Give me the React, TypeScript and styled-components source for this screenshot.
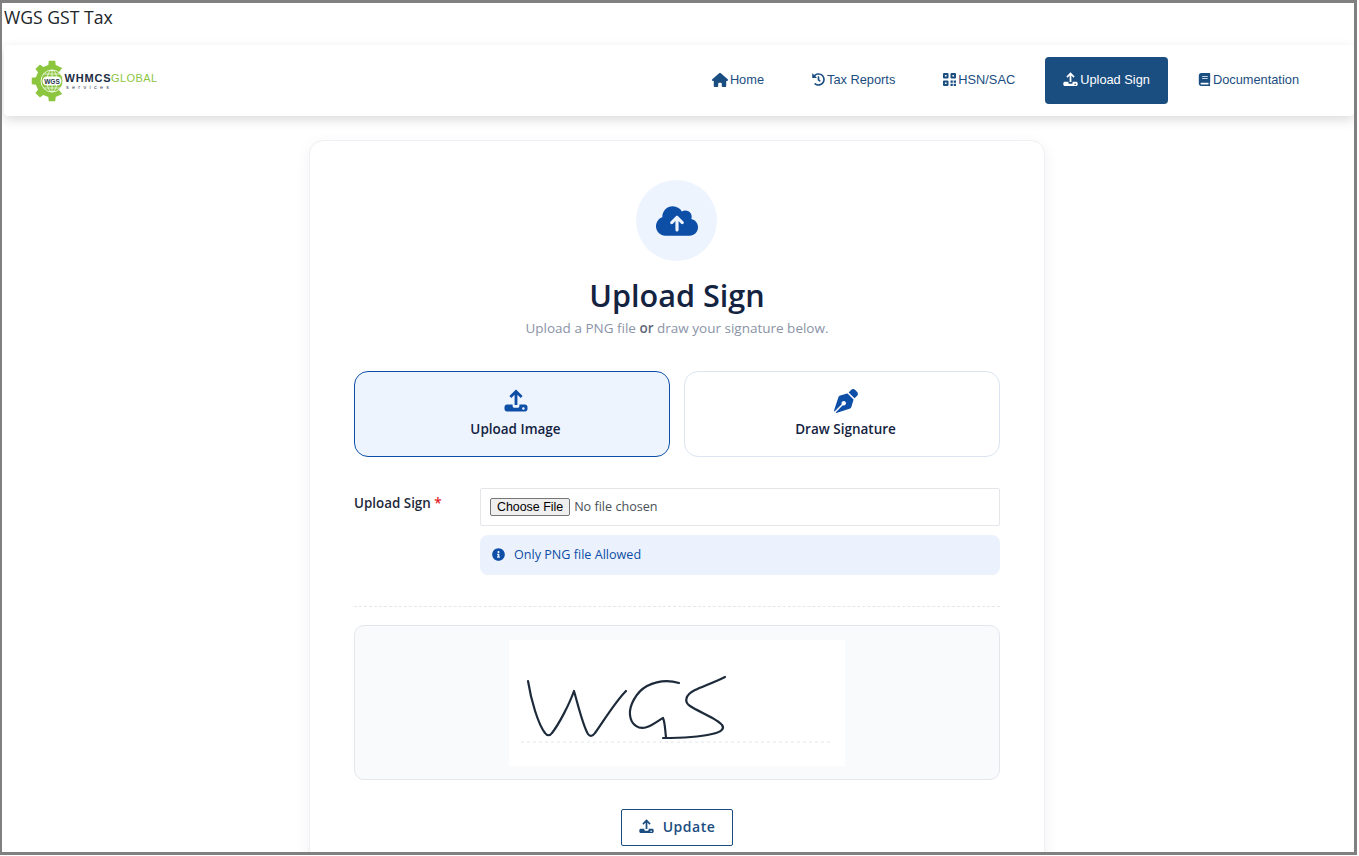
import React from 'react'
import styled, { createGlobalStyle } from 'styled-components'
import { FaBook, FaHistory, FaInfoCircle } from 'react-icons/fa'
import { FaCloudArrowUp, FaHouse, FaPenNib } from 'react-icons/fa6'

const GlobalStyle = createGlobalStyle`
  html, body {
    margin: 0;
    padding: 0;
    background: #fff;
  }
  * {
    box-sizing: border-box;
  }
`

const Frame = styled.div`
  width: 1357px;
  height: 855px;
  overflow: hidden;
  background: #fff;
  border-style: solid;
  border-color: #808080;
  border-width: 3px 3px 3px 2px;
  font-family: 'Open Sans', sans-serif;
  color: #212529;
`

const PageTitle = styled.div`
  font-size: 17.6px;
  line-height: 28px;
  padding-left: 2px;
  color: #212529;
`

const NavBar = styled.nav`
  height: 71px;
  margin: 14px 0 0 2px;
  width: 1350px;
  padding: 0 37px 0 27px;
  display: flex;
  align-items: center;
  justify-content: space-between;
  background: #fff;
  border-radius: 4px;
  box-shadow: 0 4px 12px rgba(0, 0, 0, 0.14);
`

const NavList = styled.div`
  display: flex;
  gap: 12px;
`

const NavLink = styled.a<{ $active?: boolean }>`
  height: 47px;
  padding: 0 18px 2px;
  display: flex;
  align-items: center;
  gap: 2px;
  border-radius: 4px;
  font-family: 'Liberation Sans', Arial, sans-serif;
  font-size: 12.8px;
  color: ${({ $active }) => ($active ? '#fff' : '#1a4d80')};
  background: ${({ $active }) => ($active ? '#1a4d80' : 'transparent')};
  cursor: pointer;
`

const Card = styled.main`
  width: 736px;
  height: 760px;
  margin: 24px 0 0 307px;
  padding: 39px 44px;
  display: flex;
  flex-direction: column;
  align-items: center;
  background: #fff;
  border: 1px solid #edf0f4;
  border-radius: 14px;
  box-shadow: 0 4px 16px rgba(20, 40, 80, 0.06);
`

const IconCircle = styled.div`
  width: 81px;
  height: 81px;
  flex: none;
  margin-right: 2px;
  padding-left: 2px;
  border-radius: 50%;
  background: #edf4fe;
  color: #0d4ea6;
  display: flex;
  align-items: center;
  justify-content: center;
`

const Heading = styled.h1`
  margin: 13px 0 0;
  font-size: 30.6px;
  line-height: 42px;
  font-weight: 600;
  color: #14233f;
`

const Subtitle = styled.p`
  margin: 2px 0 0;
  font-size: 13.5px;
  line-height: 20px;
  color: #8a93a6;

  strong {
    font-weight: 600;
    color: #5f6878;
  }
`

const Tabs = styled.div`
  width: 100%;
  margin-top: 33px;
  display: grid;
  grid-template-columns: 316px 316px;
  justify-content: space-between;
`

const Tab = styled.button<{ $active?: boolean }>`
  height: 86px;
  padding: 0 0 2px 7px;
  display: flex;
  flex-direction: column;
  align-items: center;
  justify-content: center;
  gap: 7px;
  font-family: inherit;
  font-size: 13.5px;
  font-weight: 600;
  color: #14233f;
  border-radius: 14px;
  border: 1px solid ${({ $active }) => ($active ? '#0d4ea6' : '#dbe4f0')};
  background: ${({ $active }) => ($active ? '#edf4fe' : '#fff')};
  cursor: pointer;

  svg {
    color: #0d4ea6;
  }
`

const FormRow = styled.div`
  width: 100%;
  margin-top: 31px;
  display: grid;
  grid-template-columns: 126px 520px;
`

const Label = styled.label`
  font-size: 13.4px;
  font-weight: 600;
  line-height: 30px;
  color: #1f2a3d;

  span {
    color: #e01b24;
  }
`

const FileInput = styled.input`
  display: block;
  width: 100%;
  height: 38px;
  padding: 9px 9px 0;
  border: 1px solid #e4e6ea;
  border-radius: 2px;
  background: #fff;
  font-family: 'Open Sans', sans-serif;
  font-size: 12.6px;
  color: #495057;

  &::file-selector-button {
    font-family: 'Liberation Sans', Arial, sans-serif;
    font-size: 12.4px;
    height: 18px;
    padding: 0 6px;
    margin-right: 4px;
    color: #000;
    background: #efefef;
    border: 1px solid #767676;
    border-radius: 2px;
  }
`

const Alert = styled.div`
  height: 40px;
  margin-top: 9px;
  padding: 0 0 2px 12px;
  display: flex;
  align-items: center;
  gap: 9px;
  border-radius: 8px;
  background: #ebf2fd;
  font-size: 12.6px;
  color: #0d4ea6;
`

const Divider = styled.hr`
  width: 100%;
  margin: 31px 0 18px;
  border: 0;
  border-top: 1px dashed #e4e7ec;
`

const PreviewBox = styled.div`
  width: 100%;
  height: 155px;
  flex: none;
  display: flex;
  align-items: center;
  justify-content: center;
  background: #f8fafc;
  border: 1px solid #e3e7ec;
  border-radius: 10px;
`

const UpdateButton = styled.button`
  width: 112px;
  height: 37px;
  flex: none;
  margin-top: 29px;
  padding: 0 0 2px;
  display: flex;
  align-items: center;
  justify-content: center;
  gap: 9px;
  background: #fff;
  border: 1px solid #1a4d80;
  border-radius: 2px;
  font-family: inherit;
  font-size: 14px;
  font-weight: 600;
  letter-spacing: 0.5px;
  color: #1a4d80;
  cursor: pointer;
`

const UploadTrayIcon = ({ size }: { size: number }) => (
  <svg width={size} height={size} viewBox="0 0 24 24" fill="currentColor">
    <path d="M12 .5 5.400 7.100l1.900 1.900 3.300-3.300V16h2.800V5.700l3.300 3.300 1.900-1.900Z" />
    <path
      fillRule="evenodd"
      d="M3 15.500h5.600V17c0 1 .8 1.800 1.800 1.800h3.200c1 0 1.800-.8 1.800-1.800v-1.500H21c1.400 0 2.500 1.100 2.500 2.500v2c0 1.400-1.100 2.500-2.500 2.500H3C1.600 22.500.5 21.400.5 20v-2c0-1.400 1.100-2.500 2.500-2.500Zm16.400 2.700a1.300 1.300 0 1 0 0 2.600 1.300 1.300 0 0 0 0-2.600Z"
    />
  </svg>
)

const GridIcon = () => (
  <svg width="13" height="13" viewBox="0 0 13 13" fill="currentColor">
    <path
      fillRule="evenodd"
      d="M1 0h3.500a1 1 0 0 1 1 1v3.500a1 1 0 0 1-1 1H1a1 1 0 0 1-1-1V1a1 1 0 0 1 1-1Zm.9 1.900v1.700h1.700V1.900ZM8.500 0H12a1 1 0 0 1 1 1v3.500a1 1 0 0 1-1 1H8.500a1 1 0 0 1-1-1V1a1 1 0 0 1 1-1Zm.9 1.900v1.700h1.700V1.900ZM1 7.500h3.500a1 1 0 0 1 1 1V12a1 1 0 0 1-1 1H1a1 1 0 0 1-1-1V8.500a1 1 0 0 1 1-1Zm.9 1.900v1.700h1.700V9.400Z"
    />
    <path d="M7.500 7.500h2.300v2.300H7.500ZM10.700 7.500H13v2.300h-2.300ZM7.500 10.700h2.300V13H7.500ZM10.700 10.700H13V13h-2.300Z" />
  </svg>
)

// gear outline: teeth every 45deg on the left side, the right side is left open for the wordmark
const gearPath = () => {
  const cx = 21
  const cy = 22
  const at = (deg: number, r: number) => {
    const a = (deg * Math.PI) / 180
    return `${(cx - Math.sin(a) * r).toFixed(2)} ${(cy - Math.cos(a) * r).toFixed(2)}`
  }
  const parts = [`M${at(-38, 10)}`, `L${at(-38, 16.5)}`]
  ;[0, 45, 90, 135, 180].forEach((t) => {
    parts.push(`L${at(t - 13, 16.5)}`, `L${at(t - 9, 20.5)}`, `L${at(t + 9, 20.5)}`, `L${at(t + 13, 16.5)}`)
  })
  parts.push(`L${at(218, 16.5)}`, `L${at(218, 10)}`, 'Z')
  return parts.join(' ')
}

const Logo = () => (
  <svg width="130" height="44" viewBox="0 0 130 44">
    <path d={gearPath()} fill="#8cc63f" />
    <circle cx="21" cy="22" r="11" fill="#8cc63f" stroke="#fff" strokeWidth="0.8" />
    <g fill="none" stroke="#fff" strokeWidth="0.7">
      <ellipse cx="21" cy="22" rx="5" ry="11" />
      <path d="M21 11v22M12.500 15h17M12.500 29h17" />
    </g>
    <rect x="11.500" y="17.500" width="19" height="9" rx="4.500" fill="#fff" />
    <text x="21" y="24.500" textAnchor="middle" fontFamily="'Liberation Sans', sans-serif" fontSize="6.500" fontWeight="700" fill="#26364a">
      WGS
    </text>
    <text x="33.500" y="22.500" fontFamily="'Liberation Sans', sans-serif" fontSize="11" fontWeight="700" fill="#1c2c44" textLength="46">
      WHMCS
    </text>
    <text x="80" y="22.500" fontFamily="'Liberation Sans', sans-serif" fontSize="11" fill="#8cc63f" textLength="46">
      GLOBAL
    </text>
    <text x="35" y="29.500" fontFamily="'Liberation Sans', sans-serif" fontSize="5.500" fill="#3b4656" textLength="43">
      services
    </text>
  </svg>
)

// signature traced by eye from the reference
const Signature = () => (
  <svg width="336" height="126" viewBox="0 0 336 126" style={{ background: '#fff', display: 'block' }}>
    <path d="M12 102H324" stroke="#e3e6ea" strokeWidth="1" strokeDasharray="3 3" fill="none" />
    <g fill="none" stroke="#1d2a3a" strokeWidth="2.200" strokeLinecap="round" strokeLinejoin="round">
      <path d="M19 41C22 60 29 84 36 93C38 96 41 96 43 93C50 84 60 65 65 51C69 65 74 86 79 94C81 97 84 96 86 93C94 82 106 62 117 51" />
      <path d="M170 43C160 40 148 41 138 46C127 52 120 66 121 75C122 85 130 90 138 87C144 85 150 80 154 78C156 82 156 90 157 97" />
      <path d="M154 98C170 98 190 97 203 94C212 92 216 89 213 85C209 79 190 72 181 66C175 62 176 55 186 50C195 46 206 42 216 37" />
    </g>
  </svg>
)

export default function App() {
  return (
    <Frame>
      <GlobalStyle />
      <PageTitle>WGS GST Tax</PageTitle>
      <NavBar>
        <Logo />
        <NavList>
          <NavLink>
            <FaHouse size={16} /> Home
          </NavLink>
          <NavLink>
            <FaHistory size={13} /> Tax Reports
          </NavLink>
          <NavLink>
            <GridIcon /> HSN/SAC
          </NavLink>
          <NavLink $active>
            <UploadTrayIcon size={15} /> Upload Sign
          </NavLink>
          <NavLink>
            <FaBook size={13} /> Documentation
          </NavLink>
        </NavList>
      </NavBar>
      <Card>
        <IconCircle>
          <FaCloudArrowUp size={42} />
        </IconCircle>
        <Heading>Upload Sign</Heading>
        <Subtitle>
          Upload a PNG file <strong>or</strong> draw your signature below.
        </Subtitle>
        <Tabs>
          <Tab $active>
            <UploadTrayIcon size={24} />
            Upload Image
          </Tab>
          <Tab>
            <FaPenNib size={24} />
            Draw Signature
          </Tab>
        </Tabs>
        <FormRow>
          <Label>
            Upload Sign <span>*</span>
          </Label>
          <div>
            <FileInput type="file" />
            <Alert>
              <FaInfoCircle size={13} />
              Only PNG file Allowed
            </Alert>
          </div>
        </FormRow>
        <Divider />
        <PreviewBox>
          <Signature />
        </PreviewBox>
        <UpdateButton>
          <UploadTrayIcon size={15} />
          Update
        </UpdateButton>
      </Card>
    </Frame>
  )
}
